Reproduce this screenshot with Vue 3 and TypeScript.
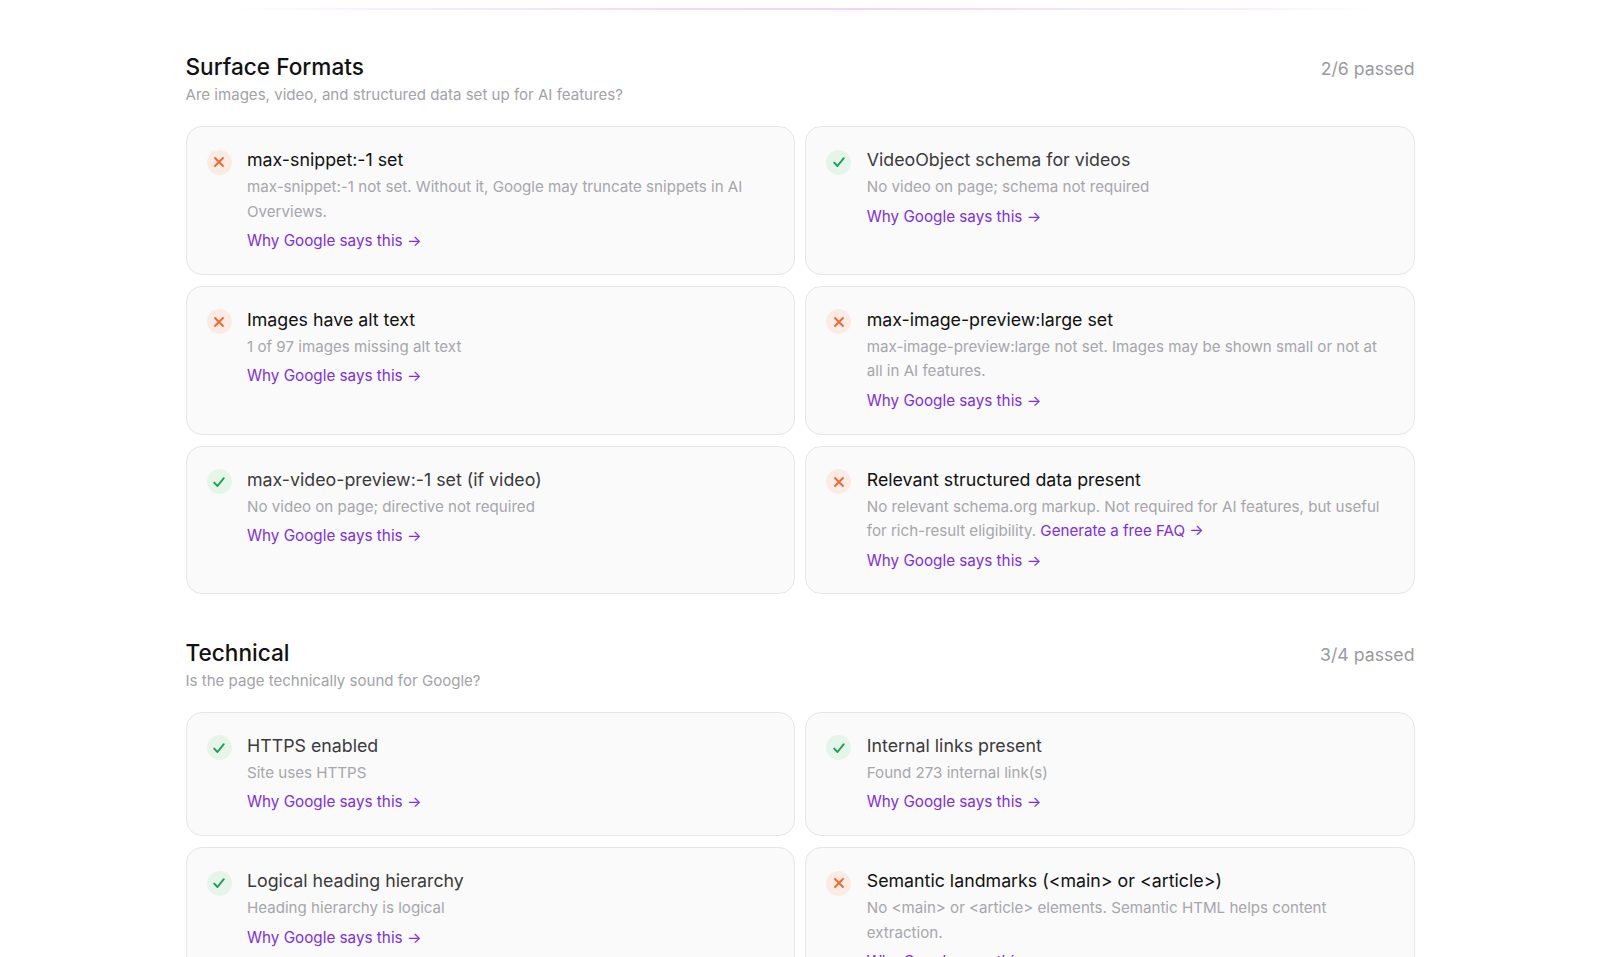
<script setup lang="ts">
interface Check {
  title: string
  desc: string
  passed: boolean
  extra?: string
}

interface Section {
  name: string
  question: string
  score: string
  checks: Check[]
}

const sections: Section[] = [
  {
    name: 'Surface Formats',
    question: 'Are images, video, and structured data set up for AI features?',
    score: '2/6 passed',
    checks: [
      { title: 'max-snippet:-1 set', desc: 'max-snippet:-1 not set. Without it, Google may truncate snippets in AI Overviews.', passed: false },
      { title: 'VideoObject schema for videos', desc: 'No video on page; schema not required', passed: true },
      { title: 'Images have alt text', desc: '1 of 97 images missing alt text', passed: false },
      { title: 'max-image-preview:large set', desc: 'max-image-preview:large not set. Images may be shown small or not at all in AI features.', passed: false },
      { title: 'max-video-preview:-1 set (if video)', desc: 'No video on page; directive not required', passed: true },
      { title: 'Relevant structured data present', desc: 'No relevant schema.org markup. Not required for AI features, but useful for rich-result eligibility.', passed: false, extra: 'Generate a free FAQ →' },
    ],
  },
  {
    name: 'Technical',
    question: 'Is the page technically sound for Google?',
    score: '3/4 passed',
    checks: [
      { title: 'HTTPS enabled', desc: 'Site uses HTTPS', passed: true },
      { title: 'Internal links present', desc: 'Found 273 internal link(s)', passed: true },
      { title: 'Logical heading hierarchy', desc: 'Heading hierarchy is logical', passed: true },
      { title: 'Semantic landmarks (<main> or <article>)', desc: 'No <main> or <article> elements. Semantic HTML helps content extraction.', passed: false },
    ],
  },
]
</script>

<template>
  <div class="page">
    <div class="divider" />
    <section v-for="section in sections" :key="section.name" class="section">
      <header class="section-head">
        <div>
          <h2 class="section-name">{{ section.name }}</h2>
          <p class="section-question">{{ section.question }}</p>
        </div>
        <span class="section-score">{{ section.score }}</span>
      </header>
      <div class="grid">
        <article v-for="check in section.checks" :key="check.title" class="card">
          <span class="status" :class="check.passed ? 'status-pass' : 'status-fail'">
            <svg v-if="check.passed" width="14" height="14" viewBox="0 0 14 14" fill="none">
              <path d="M2.2 7.6 5.5 11l6.3-7.8" stroke="currentColor" stroke-width="1.9" stroke-linecap="round" stroke-linejoin="round" />
            </svg>
            <svg v-else width="12" height="12" viewBox="0 0 12 12" fill="none">
              <path d="M2 2l8 8M10 2l-8 8" stroke="currentColor" stroke-width="1.8" stroke-linecap="round" />
            </svg>
          </span>
          <div class="body">
            <h3 class="title" :class="{ 'title-fail': !check.passed }">{{ check.title }}</h3>
            <p class="desc">
              {{ check.desc }}
              <a v-if="check.extra" href="#" class="link">{{ check.extra }}</a>
            </p>
            <a href="#" class="link why">Why Google says this →</a>
          </div>
        </article>
      </div>
    </section>
  </div>
</template>

<style scoped>
.page {
  height: 957px;
  overflow: hidden;
  box-sizing: border-box;
  padding: 8px 185.5px 0;
  font-family: Inter, 'Liberation Sans', sans-serif;
  background: #fff;
}
.divider {
  height: 2px;
  margin: 0 40px 0 50px;
  background: linear-gradient(90deg, rgba(236, 200, 245, 0), #f9eefc 12%, #f1d9f8 40%, #f0d5f8 55%, #f8eefc 88%, rgba(236, 200, 245, 0));
}
.section {
  margin-top: 42px;
}
.section + .section {
  margin-top: 43.5px;
}
.section-head {
  display: flex;
  justify-content: space-between;
  align-items: flex-start;
  margin-bottom: 20px;
}
.section-name {
  margin: 0;
  font-size: 22.6px;
  line-height: 30px;
  font-weight: 500;
  color: #111;
}
.section-question {
  margin: 2px 0 0;
  font-size: 15.07px;
  line-height: 22px;
  color: #a3a3a8;
}
.section-score {
  margin-top: 5px;
  font-size: 17.7px;
  line-height: 24px;
  color: #9a9a9f;
}
.grid {
  display: grid;
  grid-template-columns: 1fr 1fr;
  gap: 11px 10.5px;
}
.card {
  display: flex;
  gap: 15.5px;
  box-sizing: border-box;
  padding: 20px 20px 21.6px;
  border: 1px solid #e6e6e8;
  border-radius: 16px;
  background: #fafafa;
}
.status {
  flex: none;
  display: flex;
  align-items: center;
  justify-content: center;
  width: 25px;
  height: 25px;
  margin-top: 2.5px;
  border-radius: 50%;
}
.status-pass {
  background: #e5f5ea;
  color: #1f9d55;
}
.status-fail {
  background: #faece4;
  color: #f4642a;
}
.body {
  min-width: 0;
}
.title {
  margin: 0;
  font-size: 17.8px;
  line-height: 26px;
  font-weight: 400;
  color: #3a3a3d;
}
.title-fail {
  color: #111;
}
.desc {
  margin: 2px 0 0;
  font-size: 15.13px;
  line-height: 24.6px;
  color: #a6a6ab;
}
.link {
  color: #7c2ee6;
  text-decoration: none;
}
.why {
  display: block;
  margin-top: 6px;
  font-size: 15.25px;
  line-height: 22px;
}
</style>

<style>
html,
body {
  margin: 0;
  overflow: hidden;
}
</style>
